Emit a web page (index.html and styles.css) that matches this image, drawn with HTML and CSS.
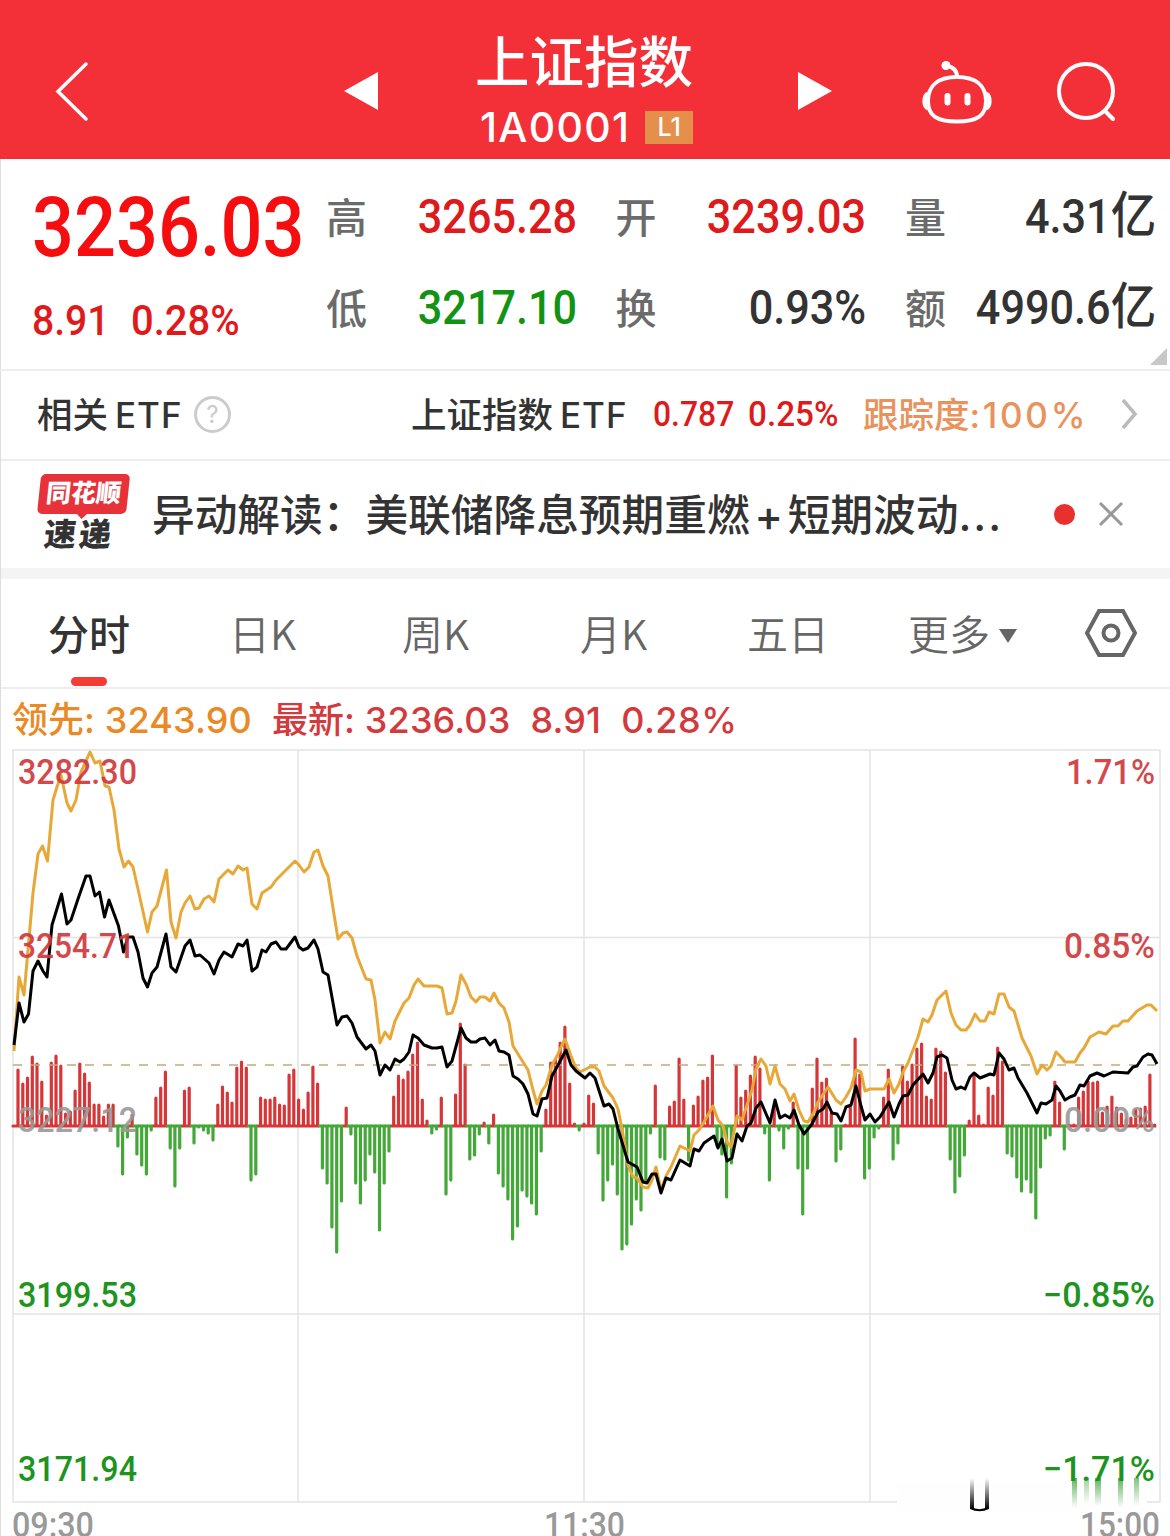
FILE: index.html
```html
<!DOCTYPE html>
<html lang="zh-CN">
<head>
  <meta charset="UTF-8">
  <meta name="viewport" content="width=device-width, initial-scale=1.0">
  <title>上证指数</title>
  <link rel="stylesheet" href="styles.css">
</head>
<body>

<header class="header">
  <svg class="back" width="36" height="62" viewBox="0 0 36 62"><path d="M32 4L4 31.500L32 59"/></svg>
  <svg class="prev" width="34" height="38" viewBox="0 0 34 38"><path d="M34 0V38L0 19Z"/></svg>
  <div class="heading">
    <div class="title">上证指数</div>
    <div class="code">1A0001<span class="badge">L1</span></div>
  </div>
  <svg class="next" width="34" height="38" viewBox="0 0 34 38"><path d="M0 0V38L34 19Z"/></svg>
  <svg class="robot" width="72" height="66" viewBox="0 0 72 66">
    <path d="M35 16C53 16 64 24 64 40C64 55 55 60.500 35 60.500C15 60.500 6 55 6 40C6 24 17 16 35 16Z"/>
    <path d="M35 16C35 9 31 6 25 5"/>
    <path d="M5 33C1.500 36 1.500 44 5 47M65 33C68.500 36 68.500 44 65 47"/>
    <path class="eye" d="M25.500 35V41.500M45.500 35V41.500"/>
    <circle class="tip" cx="24" cy="4.500" r="4.500"/>
  </svg>
  <svg class="search" width="62" height="62" viewBox="0 0 62 62"><circle cx="30" cy="29" r="27"/><path d="M49 49L57 57"/></svg>
</header>

<section class="quote">
  <div class="main">
    <div class="price"><span class="din">3236.03</span></div>
    <div class="change"><span class="din">8.91</span><span class="din pct">0.28%</span></div>
  </div>
  <div class="stats">
    <div class="stat"><span class="name">高</span><span class="din up">3265.28</span></div>
    <div class="stat"><span class="name">开</span><span class="din up">3239.03</span></div>
    <div class="stat"><span class="name">量</span><span class="din">4.31<b>亿</b></span></div>
    <div class="stat"><span class="name">低</span><span class="din down">3217.10</span></div>
    <div class="stat"><span class="name">换</span><span class="din">0.93%</span></div>
    <div class="stat"><span class="name">额</span><span class="din">4990.6<b>亿</b></span></div>
  </div>
  <svg class="corner" width="17" height="17" viewBox="0 0 17 17"><path d="M17 0V17H0Z"/></svg>
</section>

<section class="etf">
  <span class="etf-label">相关<i>ETF</i></span>
  <span class="help">?</span>
  <span class="etf-name">上证指数<i>ETF</i></span>
  <span class="etf-num"><span class="din">0.787</span></span>
  <span class="etf-num etf-pct"><span class="din">0.25%</span></span>
  <span class="track">跟踪度<i>:100%</i></span>
  <svg class="arrow" width="17" height="32" viewBox="0 0 17 32"><path d="M2 2L14 16L2 30"/></svg>
</section>

<section class="news">
  <div class="logo">
    <div class="logo-top">同花顺</div>
    <div class="logo-bottom">速递</div>
  </div>
  <div class="news-title">异动解读：美联储降息预期重燃<i>+</i>短期波动<em>...</em></div>
  <span class="dot"></span>
  <svg class="close" width="26" height="26" viewBox="0 0 26 26"><path d="M2 2L24 24M24 2L2 24"/></svg>
</section>

<nav class="tabs">
  <a class="tab active">分时</a>
  <a class="tab">日K</a>
  <a class="tab month">周K</a>
  <a class="tab five">月K</a>
  <a class="tab days">五日</a>
  <a class="tab more">更多<svg width="18" height="14" viewBox="0 0 18 14"><path d="M0 0H18L9 14Z"/></svg></a>
  <svg class="setting" width="52" height="48" viewBox="0 0 52 48"><path d="M14 2H38L50 24L38 46H14L2 24Z"/><circle cx="26" cy="24" r="7.500"/></svg>
</nav>

<div class="legend">
  <span class="lead">领先<i>: 3243.90</i></span>
  <span class="last">最新<i>: 3236.03</i></span>
  <span class="last"><i>8.91</i></span>
  <span class="last"><i>0.28%</i></span>
</div>

<svg class="chart" width="1170" height="788" viewBox="0 748 1170 788">
  <defs>
    <linearGradient id="fadeGreen" x1="0" y1="0" x2="0" y2="1">
      <stop offset="0" stop-color="#1d941d" stop-opacity=".7"/>
      <stop offset="1" stop-color="#1d941d" stop-opacity="0"/>
    </linearGradient>
    <linearGradient id="fadeBlack" x1="0" y1="0" x2="0" y2="1">
      <stop offset="0" stop-color="#000" stop-opacity="0"/>
      <stop offset="1" stop-color="#000"/>
    </linearGradient>
  </defs>
  <path class="grid" d="M13 750H1160V1502H13ZM13 937.500H1160M13 1314H1160M298 750V1502M584 750V1502M870 750V1502"/>
  <path class="bars-up" id="barsUp"/>
  <path class="bars-down" id="barsDown"/>
  <path class="now" d="M13 1065H1160"/>
  <polyline class="line-lead" id="lineLead"/>
  <polyline class="line-price" id="linePrice"/>

  <g class="labels">
    <text class="up" x="18" y="784" textLength="119">3282.30</text>
    <text class="up" x="18" y="958" textLength="117">3254.71</text>
    <text class="flat" x="18" y="1132" textLength="119">3227.12</text>
    <text class="down" x="18" y="1307" textLength="119">3199.53</text>
    <text class="down" x="18" y="1481" textLength="119">3171.94</text>
    <text class="up" x="1066" y="784" textLength="89">1.71%</text>
    <text class="up" x="1064" y="958" textLength="91">0.85%</text>
    <text class="flat" x="1064" y="1132" textLength="91">0.00%</text>
    <text class="down" x="1043" y="1307" textLength="112">−0.85%</text>
    <text class="down" x="1043" y="1481" textLength="112">−1.71%</text>
  </g>

  <rect class="smear" x="897" y="1482" width="250" height="29"/>
  <rect fill="url(#fadeGreen)" x="1072" y="1478" width="5" height="30"/>
  <rect fill="url(#fadeGreen)" x="1084" y="1478" width="5" height="26" opacity=".6"/>
  <rect fill="url(#fadeGreen)" x="1095" y="1478" width="6" height="28"/>
  <rect fill="url(#fadeGreen)" x="1118" y="1478" width="5" height="30"/>
  <rect fill="url(#fadeGreen)" x="1134" y="1478" width="5" height="28" opacity=".8"/>
  <rect fill="url(#fadeBlack)" x="970" y="1478" width="4" height="31"/>
  <rect fill="url(#fadeBlack)" x="985" y="1478" width="4" height="31"/>
  <path d="M970.500 1508Q979.500 1512.500 988.500 1508" fill="none" stroke="#000" stroke-width="2"/>

  <g class="labels times">
    <text x="12" y="1537" textLength="82">09:30</text>
    <text x="544" y="1537" textLength="81">11:30</text>
    <text x="1080" y="1537" textLength="80">15:00</text>
  </g>
</svg>

<script src="chart.js"></script>
</body>
</html>
```
FILE: styles.css
```css
* {
  box-sizing: border-box;
}

body {
  margin: 0;
  width: 1170px;
  height: 1536px;
  overflow: hidden;
  background: #fff;
  color: #333;
  font-family: Inter, "Noto Sans CJK SC", sans-serif;
}

/* hairline on the left edge */
body::before {
  content: "";
  position: absolute;
  left: 0;
  top: 159px;
  bottom: 0;
  width: 1px;
  background: #ddd;
}

i,
em,
b {
  font-style: normal;
  font-weight: inherit;
}

/* narrow digits */
.din {
  display: inline-block;
  font-family: Roboto, "Noto Sans CJK SC", sans-serif;
  font-weight: 500;
  transform: scaleX(.91);
  transform-origin: right center;
  white-space: nowrap;
}

.up {
  color: #dd1a1c;
}

.down {
  color: #139313;
}

/* header */
.header {
  display: flex;
  align-items: flex-start;
  height: 159px;
  background: #f33038;
  color: #fff;
}

.header svg {
  flex: none;
  fill: none;
  stroke: #fff;
  stroke-width: 4;
  stroke-linecap: round;
}

.header .back {
  margin: 60px 0 0 54px;
  stroke-width: 3.5;
}

.header .prev,
.header .next {
  margin-top: 72px;
  fill: #fff;
  stroke: none;
}

.header .prev {
  margin-left: 254px;
}

.header .next {
  margin-left: 94px;
}

.heading {
  width: 232px;
  margin: 31px 0 0 94px;
}

.title {
  height: 62px;
  padding-left: 3px;
  font-size: 54.5px;
  font-weight: 500;
  line-height: 62px;
}

.code {
  display: flex;
  align-items: center;
  height: 68px;
  padding-left: 8px;
  font-size: 41px;
  font-weight: 500;
  letter-spacing: 1.3px;
}

.badge {
  width: 48px;
  height: 33px;
  margin-left: 15px;
  background: #e5904a;
  font-size: 25px;
  line-height: 33px;
  text-align: center;
  letter-spacing: 0;
}

.header .robot {
  margin: 61px 0 0 90px;
}

.header .eye {
  stroke-width: 6;
}

.header .tip {
  fill: #fff;
  stroke: none;
}

.header .search {
  margin: 62px 0 0 62px;
}

/* quote */
.quote {
  position: relative;
  display: flex;
  height: 212px;
  border-bottom: 2px solid #eee;
}

.main {
  width: 326px;
  padding-left: 32px;
  color: #f50d0f;
}

.main .din {
  transform-origin: left center;
}

.price {
  height: 98px;
  margin-top: 18px;
  font-size: 84px;
  line-height: 98px;
}

.price .din {
  transform: scaleX(.88);
}

.change {
  display: flex;
  height: 50px;
  margin-top: 20px;
  font-size: 43px;
  line-height: 50px;
  color: #e01a1c;
}

.change .pct {
  margin-left: 14px;
  transform: scaleX(.93);
}

.stats {
  display: grid;
  grid-template-columns: 250px 250px 250px;
  grid-template-rows: 91px 91px;
  column-gap: 39.500px;
  margin-top: 12px;
}

.stat {
  display: flex;
  align-items: center;
  justify-content: space-between;
  font-size: 47.500px;
}

.stat .din {
  margin-right: -1px;
}

.stat .name {
  margin-top: -3px;
  font-size: 41px;
  font-weight: 500;
  color: #6b6b6b;
}

.stat b {
  font-size: 50px;
  line-height: 50px;
}

.corner {
  position: absolute;
  right: 3px;
  bottom: 4px;
  fill: #c8c8c8;
}

/* related etf */
.etf {
  display: flex;
  align-items: center;
  height: 90px;
  padding: 0 0 2px 37px;
  border-bottom: 2px solid #eee;
  font-size: 35.500px;
  font-weight: 500;
  white-space: nowrap;
}

.etf-label,
.etf-name,
.track {
  margin-top: -3px;
}

.etf-label {
  width: 157px;
}

.etf-label i,
.etf-name i {
  margin-left: 7px;
  font-size: 35px;
  letter-spacing: 1px;
}

.help {
  width: 37px;
  height: 37px;
  border: 3px solid #ccc;
  border-radius: 50%;
  color: #ccc;
  font-size: 24px;
  font-weight: 400;
  line-height: 31px;
  text-align: center;
}

.etf-name {
  width: 242px;
  margin-left: 180px;
}

.etf-num {
  width: 95px;
  margin-top: -2px;
  color: #dd1a1c;
  font-size: 35px;
}

.etf-num .din {
  transform-origin: left center;
}

.etf-pct {
  width: 115px;
}

.etf-pct .din {
  transform: scaleX(.95);
}

.track {
  width: 258px;
  color: #e8925c;
}

.track i {
  font-size: 35px;
  letter-spacing: 2.7px;
}

.arrow,
.close {
  fill: none;
  stroke: #bbb;
  stroke-width: 3.5;
}

/* news */
.news {
  display: flex;
  align-items: center;
  height: 118px;
  padding: 0 0 1px 37px;
  border-bottom: 11px solid #f4f4f4;
}

.logo {
  width: 89px;
  height: 80px;
  text-align: center;
  transform: skewX(-6deg);
}

.logo-top {
  height: 40px;
  border-radius: 5px;
  background: #e8323a;
  color: #fff;
  font-size: 25px;
  font-weight: 900;
  line-height: 39px;
}

.logo-top::after {
  content: "";
  display: block;
  width: 0;
  margin: 0 auto;
  border: 6px solid transparent;
  border-top-color: #e8323a;
}

.logo-bottom {
  margin-top: 4px;
  font-size: 32px;
  font-weight: 900;
  letter-spacing: 3px;
  line-height: 34px;
}

.news-title {
  width: 902px;
  margin: -5px 0 0 26px;
  font-size: 42.700px;
  font-weight: 500;
  white-space: nowrap;
}

.news-title i {
  display: inline-block;
  width: 38px;
  text-align: center;
}

.news-title em {
  letter-spacing: 2px;
}

.dot {
  width: 21px;
  height: 21px;
  border-radius: 50%;
  background: #e8302e;
}

.close {
  margin-left: 23px;
  stroke: #999;
  stroke-width: 3;
}

/* tabs */
.tabs {
  display: flex;
  align-items: center;
  height: 110px;
  padding-left: 48px;
  border-bottom: 2px solid #eee;
  font-size: 41px;
}

.tab {
  position: relative;
  width: 173px;
  margin-top: -3px;
  font-family: "Noto Sans CJK SC", sans-serif;
  font-weight: 350;
  color: #666;
  white-space: nowrap;
}

.tab.active {
  font-weight: 500;
  color: #333;
  width: 181px;
}

.tab.active::after {
  content: "";
  position: absolute;
  left: 23px;
  bottom: -24px;
  width: 36px;
  height: 9px;
  border-radius: 5px;
  background: #f23c35;
}

.tab.month {
  width: 178px;
}

.tab.five {
  width: 167px;
}

.tab.days {
  width: 161px;
}

.tab.more {
  width: 177px;
}

.tab.more svg {
  margin: 0 0 7px 9px;
  fill: #666;
}

.setting {
  fill: none;
  stroke: #666;
  stroke-width: 4;
}

/* legend */
.legend {
  display: flex;
  align-items: baseline;
  gap: 20px;
  height: 59px;
  padding: 4px 0 0 12px;
  font-size: 36px;
  font-weight: 500;
  line-height: 54px;
  white-space: nowrap;
}

.legend i {
  letter-spacing: .15px;
}

.legend .last:last-child i {
  letter-spacing: .5px;
}

.lead {
  color: #e88a25;
}

.last {
  color: #d33a3e;
}

/* chart */
.chart {
  display: block;
}

.grid,
.now,
.bars-up,
.bars-down,
.line-lead,
.line-price {
  fill: none;
}

.grid {
  stroke: #e4e4e4;
  stroke-width: 1.5;
}

.now {
  stroke: #c9a878;
  stroke-width: 1.5;
  stroke-dasharray: 9 9;
}

.bars-up,
.bars-down {
  stroke-width: 3.2;
  stroke-linecap: round;
}

.bars-up {
  stroke: #d63637;
}

.bars-down {
  stroke: #43a838;
}

.line-lead,
.line-price {
  stroke-width: 3;
  stroke-linejoin: round;
}

.line-lead {
  stroke: #e8a838;
}

.line-price {
  stroke: #000;
}

.labels {
  font-family: Roboto, sans-serif;
  font-size: 35px;
  font-weight: 500;
}

.labels .up {
  fill: #d0393d;
  opacity: .92;
}

.labels .flat {
  fill: #999;
  opacity: .9;
}

.labels .down {
  fill: #1d941d;
}

.times {
  fill: #999;
}

.smear {
  fill: #fefefe;
}
```
FILE: chart.js
```js
// bar heights, one per minute
var bars = [
  56,42,48,69,62,44,10,63,70,60,12,14,35,62,52,43,21,21,9,21,
  21,-20,-48,-11,11,-28,-39,-48,-4,28,38,54,-22,-60,-22,35,38,-17,-1,-4,
  -7,-14,21,39,33,23,58,64,58,-54,-48,28,26,26,28,21,20,51,56,26,
  16,33,59,42,-42,-57,-101,-126,-75,18,-8,-57,-77,-54,-28,-46,-104,-57,-25,29,
  50,46,54,71,83,26,5,-7,-3,28,-68,-54,31,102,61,-33,-29,-8,3,-17,
  11,-47,-60,-73,-113,-100,-64,-70,-77,-88,-25,16,63,66,83,99,42,2,-4,2,
  30,22,-27,-74,-54,-38,-68,-123,-118,-98,-73,-84,-55,-7,40,-31,-33,19,24,67,
  26,-34,20,29,45,48,70,-20,-28,-71,-37,60,28,35,50,69,57,-7,-54,19,
  -4,-22,-2,23,-42,-88,-42,37,67,43,47,13,-35,-23,1,19,87,51,-52,-42,
  -11,-2,28,56,-33,-17,59,44,61,77,82,29,26,77,74,53,-33,-66,-50,-29,
  5,51,10,1,38,30,78,64,-27,-30,-51,-65,-53,-66,-92,-41,-12,-9,44,23,
  -23,1,1,28,34,44,43,44,13,19,29,18,12,6,8,16,17,19,51,1
];

var price = "14,1045 19,1003 24,1022 28.5,1014 33,971 38,961 43,971 47,977 52,925 61.5,894 67,924 71,920 78,899 86,876 90,876 95,896 99.5,892 104.5,917 109,900 118.5,926 123.5,952 128,937 133,937 138,952 143,978 147.5,987 152,973 157,967 166,934 171,967 176,972 185,946 190,940 195,956 200,955 209,963 214,974 219,960 224,952 232,957 238,944 243,946 247,940 252,971 257,967 262,950 266,952 271,944 276,942 281,949 286,949 295,937 " +
  "299,947 303,950 308,948 314,940 318,949 323,972 328,975 337,1025 342,1017 347,1016 352,1023 357,1037 366,1049 371,1045 375,1051 380,1075 385,1065 390,1070 395,1059 400,1062 404,1059 409,1052 413,1035 418,1038 424,1045 432,1048 437,1048 442,1047 447,1067 452,1061 461,1028 466,1038 471,1042 476,1042 480,1039 485,1038 490,1045 495,1040 499,1051 504,1052 509,1055 513,1076 518,1079 523,1084 528,1094 533,1114 537,1116 542,1099 547,1098 552,1076 557,1067 566,1050 571,1065 576,1071 585,1078 " +
  "590,1073 595,1078 604,1106 609,1104 613,1109 618,1129 628,1162 637,1167 643,1182 647,1183 652,1174 656,1174 661,1193 666,1178 671,1180 680,1160 690,1166 694,1149 699,1151 704,1143 714,1136 718,1148 722,1139 727,1161 732,1158 737,1134 742,1141 747,1126 751,1123 756,1108 761,1102 770,1123 775,1100 780,1118 785,1115 790,1118 794,1110 799,1125 804,1134 812,1124 818,1112 823,1109 827,1102 832,1113 837,1114 841,1121 846,1107 851,1105 856,1086 861,1106 865,1120 870,1114 " +
  "875,1122 880,1117 889,1102 894,1117 899,1104 903,1096 908,1095 913,1085 923,1074 928,1083 933,1073 937,1057 942,1055 947,1058 952,1080 956,1089 961,1087 965,1089 970,1077 974,1073 980,1078 990,1074 994,1075 999,1053 1004,1059 1009,1070 1014,1068 1018,1078 1027,1093 1037,1113 1041,1103 1046,1104 1052,1100 1056,1086 1060,1091 1065,1100 1070,1097 1075,1095 1080,1085 1084,1086 1090,1076 1097,1073 1104,1076 1113,1072 1128,1073 1133,1067 1137,1066 1143,1057 1148,1054 1152,1055 1157,1064";

var lead = "14,1051 19,977 24,995 28,950 33,893 38,854 42.5,846 47.5,861 53,800 57,787 61,775 67,803 71,811 76,800 81,772 90,752 95,763 100,761 105,786 109,787 114,810 119,849 124,867 128.5,861 133,867 138,889 147.5,932 152,912 157,906 166.5,870 171,922 176,938 181,912 185,903 190,896 195,909 199,908 204,899 209,896 214,902 219,879 228,870 233,874 238,866 243,870 247,868 252,904 257,909 262,893 271,887 276,880 286,870 295,861 " +
  "299,865 304,872 309,867 314,852 318,850 323,866 328,876 333,908 338,939 343,933 347,932 352,938 357,956 366,979 371,980 375,1000 380,1043 385,1032 390,1039 395,1021 404,1003 409,998 414,985 418,979 424,986 437,986 442,988 447,1014 452,1013 456,1001 461,975 466,984 471,997 476,1002 480,997 485,997 490,1001 494,993 499,1003 504,1008 509,1022 513,1046 518,1054 528,1070 533,1090 537,1104 542,1091 546,1085 552,1065 557,1056 562,1045 565,1039 571,1056 576,1068 580,1072 " +
  "590,1067 595,1067 599,1071 604,1086 613,1098 618,1109 622,1129 628,1165 633,1177 637,1178 643,1187 648,1188 652,1180 656,1167 661,1190 666,1176 671,1167 680,1146 690,1151 694,1135 699,1130 704,1122 713,1106 718,1120 723,1126 727,1142 731,1147 737,1116 742,1120 752,1090 756,1069 761,1059 766,1066 770,1084 775,1066 780,1084 785,1089 790,1101 794,1094 799,1110 804,1121 808,1122 814,1112 818,1102 828,1087 836,1100 841,1104 846,1097 851,1088 856,1070 861,1072 865,1091 870,1089 " +
  "884,1089 889,1079 894,1093 899,1084 903,1072 908,1063 918,1037 923,1019 928,1022 932,1015 937,1000 946,991 951,1013 956,1025 961,1030 966,1030 970,1025 975,1014 980,1021 985,1021 989,1012 994,1014 999,994 1004,994 1009,1007 1014,1011 1022,1038 1031,1056 1037,1074 1042,1065 1047,1070 1051,1066 1056,1052 1061,1057 1065,1062 1075,1062 1080,1053 1084,1048 1090,1037 1099,1032 1106,1034 1113,1026 1118,1026 1123,1021 1128,1021 1137,1011 1147,1005 1151,1005 1157,1011";

var zero = 1126;
var up = "M13 " + zero + "h1";
var down = "";

bars.forEach(function (h, i) {
  var x = (18 + i * 4.756).toFixed(1);
  // small foot to the left joins neighbouring bars along the zero line
  var d = "M" + (x - 3) + " " + zero + "H" + x + "V" + (zero - h);
  if (h > 0) up += d;
  else down += d;
});

document.getElementById("barsUp").setAttribute("d", up);
document.getElementById("barsDown").setAttribute("d", down);
document.getElementById("linePrice").setAttribute("points", price);
document.getElementById("lineLead").setAttribute("points", lead);

document.querySelectorAll(".labels text").forEach(function (t) {
  t.setAttribute("lengthAdjust", "spacingAndGlyphs");
});
```
